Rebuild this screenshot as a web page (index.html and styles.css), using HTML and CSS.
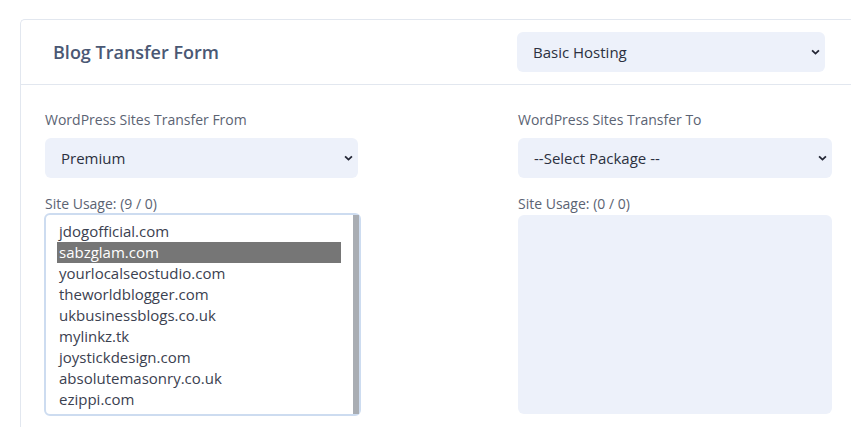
FILE: index.html
```html
<!DOCTYPE html>
<html lang="en">
<head>
<meta charset="utf-8">
<title>Blog Transfer Form</title>
<link rel="stylesheet" href="styles.css">
</head>
<body>
<div class="card">
  <div class="card-header">
    <h2 class="title">Blog Transfer Form</h2>
    <div class="select select-header">
      <span>Basic Hosting</span>
      <svg class="chev" viewBox="0 0 10 6" width="10" height="6"><path d="M1.2 1.2 L5 4.8 L8.8 1.2" fill="none" stroke="#222533" stroke-width="2"/></svg>
    </div>
  </div>
  <div class="card-body">
    <div class="col">
      <label class="label">WordPress Sites Transfer From</label>
      <div class="select">
        <span>Premium</span>
        <svg class="chev" viewBox="0 0 10 6" width="10" height="6"><path d="M1.2 1.2 L5 4.8 L8.8 1.2" fill="none" stroke="#222533" stroke-width="2"/></svg>
      </div>
      <label class="label usage">Site Usage: (9 / 0)</label>
      <div class="listbox">
        <ul class="items">
          <li>jdogofficial.com</li>
          <li class="selected">sabzglam.com</li>
          <li>yourlocalseostudio.com</li>
          <li>theworldblogger.com</li>
          <li>ukbusinessblogs.co.uk</li>
          <li>mylinkz.tk</li>
          <li>joystickdesign.com</li>
          <li>absolutemasonry.co.uk</li>
          <li>ezippi.com</li>
        </ul>
        <div class="scrollbar"></div>
      </div>
    </div>
    <div class="col">
      <label class="label">WordPress Sites Transfer To</label>
      <div class="select">
        <span>--Select Package --</span>
        <svg class="chev" viewBox="0 0 10 6" width="10" height="6"><path d="M1.2 1.2 L5 4.8 L8.8 1.2" fill="none" stroke="#222533" stroke-width="2"/></svg>
      </div>
      <label class="label usage">Site Usage: (0 / 0)</label>
      <div class="emptybox"></div>
    </div>
  </div>
</div>
</body>
</html>
```
FILE: styles.css
```css
html, body {
  margin: 0;
  padding: 0;
  background: #ffffff;
  overflow: hidden;
}
body {
  font-family: "Open Sans", "Noto Sans", sans-serif;
  padding: 19px 0 0 20px;
}
.card {
  width: 838px;
  border: 1px solid #e2e7ef;
  border-right: none;
  border-bottom: none;
  border-top-left-radius: 5px;
  height: 420px;
  box-sizing: border-box;
}
.card-header {
  display: flex;
  align-items: center;
  justify-content: space-between;
  padding: 12px 33px 12px 32px;
  border-bottom: 1px solid #e2e7ef;
}
.title {
  margin: 0;
  font-size: 18px;
  font-weight: 600;
  color: #4a5874;
}
.select {
  height: 40px;
  box-sizing: border-box;
  background: #edf1fa;
  border-radius: 6px;
  display: flex;
  align-items: center;
  justify-content: space-between;
  padding: 0 5px 0 16px;
  font-size: 15px;
  color: #2b3040;
}
.select-header {
  width: 308px;
}
.chev {
  display: block;
  width: 9px;
  height: 6px;
}
.card-body {
  display: grid;
  grid-template-columns: 313px 314px;
  column-gap: 160px;
  padding: 26px 0 0 24px;
}
.col {
  display: flex;
  flex-direction: column;
}
.label {
  font-size: 14px;
  line-height: 18px;
  color: #5b6373;
  margin-bottom: 9px;
}
.label.usage {
  margin-top: 17px;
  margin-bottom: 0;
}
.listbox {
  margin-left: -1px;
  width: 317px;
  height: 203px;
  box-sizing: border-box;
  border: 2px solid #cddcf0;
  border-radius: 6px;
  display: flex;
}
.items {
  flex: 1;
  list-style: none;
  margin: 0;
  padding: 6px 12px 0 11px;
  font-size: 15px;
  line-height: 21px;
  color: #3b4150;
}
.items li {
  padding-left: 2px;
  height: 21px;
}
.items li.selected {
  background: #767676;
  color: #ffffff;
}
.scrollbar {
  width: 6px;
  background: #a9adb3;
}
.emptybox {
  margin-top: 2px;
  height: 199px;
  background: #edf1fa;
  border-radius: 6px;
}
```
